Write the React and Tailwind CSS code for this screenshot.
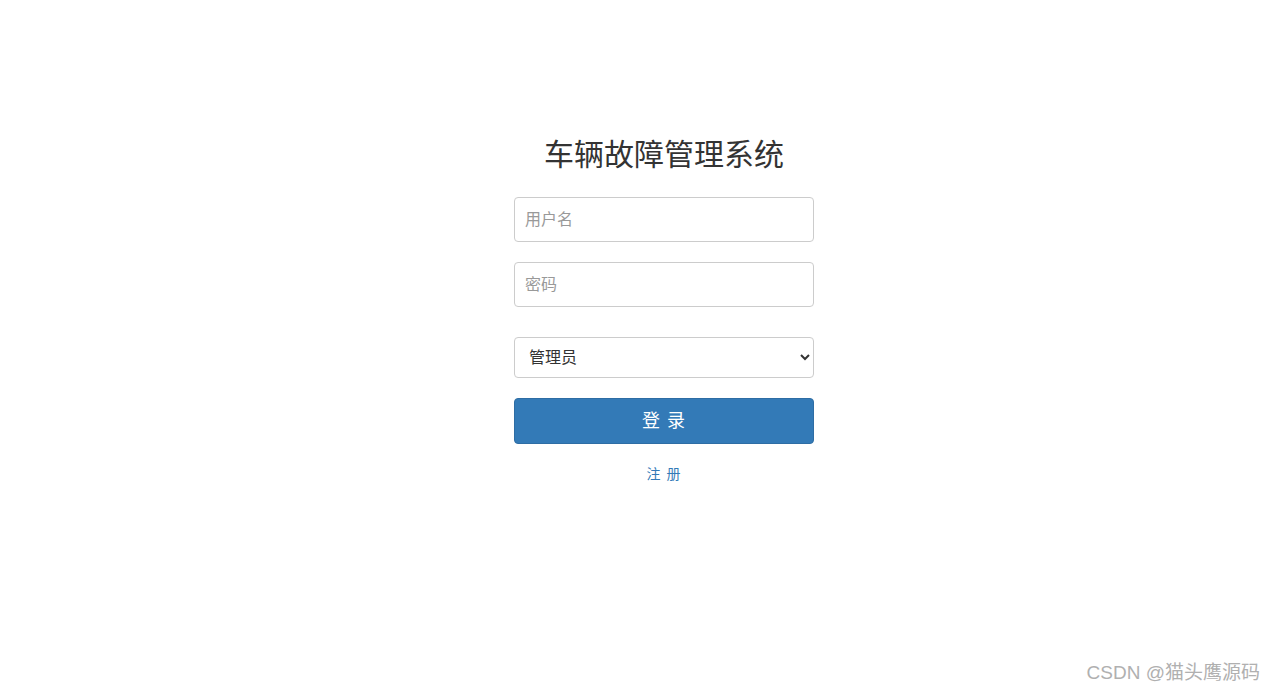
import { useState } from 'react';

const App = () => {
  const [role, setRole] = useState('admin');

  return (
    <div className="relative min-h-[693px] w-full bg-white font-['Helvetica_Neue',Helvetica,Arial,'Noto_Sans_CJK_SC',sans-serif] text-[#333]">
      <div className="pt-[133px] pl-[514px]">
        <div className="w-[300px]">
          <h1 className="text-center text-[30px] leading-[44px] font-normal text-[#333] mb-[20px]">
            车辆故障管理系统
          </h1>
          <input
            type="text"
            placeholder="用户名"
            className="block w-full h-[45px] px-[10px] border border-[#ccc] rounded-[4px] text-[16px] placeholder:text-[#999] outline-none"
          />
          <input
            type="password"
            placeholder="密码"
            className="block w-full h-[45px] mt-[20px] px-[10px] border border-[#ccc] rounded-[4px] text-[16px] placeholder:text-[#999] outline-none"
          />
          <select
            value={role}
            onChange={(e) => setRole(e.target.value)}
            className="block w-full h-[41px] mt-[30px] px-[10px] border border-[#ccc] rounded-[4px] text-[16px] text-[#333] bg-white outline-none"
          >
            <option value="admin">管理员</option>
            <option value="user">用户</option>
          </select>
          <button className="block w-full h-[46px] mt-[20px] bg-[#337ab7] border border-[#2e6da4] rounded-[4px] text-white text-[18px] tracking-[1px]">
            登 录
          </button>
          <div className="text-center mt-[18px]">
            <a href="#" className="text-[14px] text-[#337ab7] tracking-[1px]">注 册</a>
          </div>
        </div>
      </div>
      <div className="absolute right-[14px] bottom-[6px] text-[19px] text-[#b0b0b0]">
        CSDN @猫头鹰源码
      </div>
    </div>
  );
};

export default App;
